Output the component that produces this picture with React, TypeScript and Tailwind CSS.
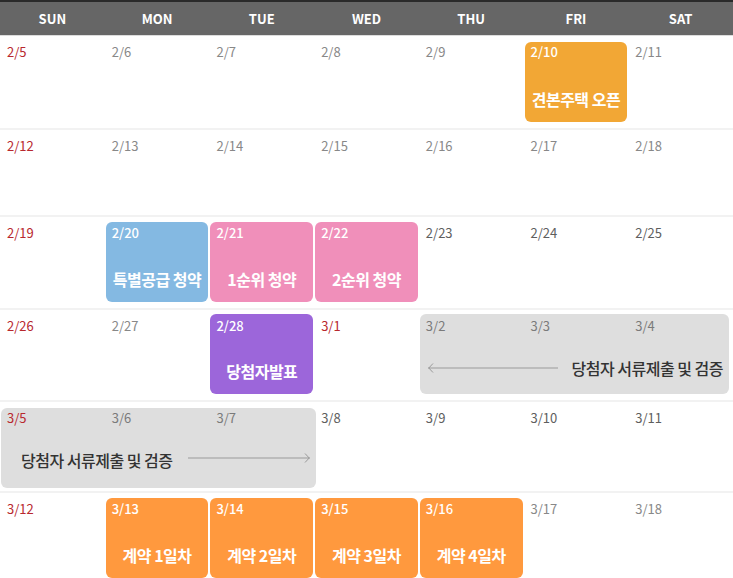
import React from "react";

type Tone = "red" | "light" | "dark" | "white" | "grayIn" | "redIn";

type Day = { d: string; tone: Tone };

type Ev = {
  cls: string;
  label: string;
  kind: "solid" | "gray-left" | "gray-right";
};

type Week = { h: string; days: Day[]; events: Ev[] };

const heads = ["SUN", "MON", "TUE", "WED", "THU", "FRI", "SAT"];

const colStart = [
  "col-start-1",
  "col-start-2",
  "col-start-3",
  "col-start-4",
  "col-start-5",
  "col-start-6",
  "col-start-7",
];

const toneCls: Record<Tone, string> = {
  red: "text-[#b8282e]",
  redIn: "text-[#b8282e]",
  light: "text-[#888]",
  dark: "text-[#5e5e5e]",
  white: "text-white",
  grayIn: "text-[#7a7a7a]",
};

const weeks: Week[] = [
  {
    h: "h-[92px]",
    days: [
      { d: "2/5", tone: "red" },
      { d: "2/6", tone: "light" },
      { d: "2/7", tone: "light" },
      { d: "2/8", tone: "light" },
      { d: "2/9", tone: "light" },
      { d: "2/10", tone: "white" },
      { d: "2/11", tone: "light" },
    ],
    events: [
      {
        cls: "col-start-6 col-span-1 mt-[6px] mx-[1px] bg-[#f2a735]",
        label: "견본주택 오픈",
        kind: "solid",
      },
    ],
  },
  {
    h: "h-[85px]",
    days: [
      { d: "2/12", tone: "red" },
      { d: "2/13", tone: "light" },
      { d: "2/14", tone: "light" },
      { d: "2/15", tone: "light" },
      { d: "2/16", tone: "light" },
      { d: "2/17", tone: "light" },
      { d: "2/18", tone: "light" },
    ],
    events: [],
  },
  {
    h: "h-[91px]",
    days: [
      { d: "2/19", tone: "red" },
      { d: "2/20", tone: "white" },
      { d: "2/21", tone: "white" },
      { d: "2/22", tone: "white" },
      { d: "2/23", tone: "dark" },
      { d: "2/24", tone: "dark" },
      { d: "2/25", tone: "dark" },
    ],
    events: [
      {
        cls: "col-start-2 col-span-1 mt-[5px] mx-[1px] bg-[#84b9e2]",
        label: "특별공급 청약",
        kind: "solid",
      },
      {
        cls: "col-start-3 col-span-1 mt-[5px] mx-[1px] bg-[#f08fba]",
        label: "1순위 청약",
        kind: "solid",
      },
      {
        cls: "col-start-4 col-span-1 mt-[5px] mx-[1px] bg-[#f08fba]",
        label: "2순위 청약",
        kind: "solid",
      },
    ],
  },
  {
    h: "h-[90px]",
    days: [
      { d: "2/26", tone: "red" },
      { d: "2/27", tone: "light" },
      { d: "2/28", tone: "white" },
      { d: "3/1", tone: "red" },
      { d: "3/2", tone: "grayIn" },
      { d: "3/3", tone: "grayIn" },
      { d: "3/4", tone: "grayIn" },
    ],
    events: [
      {
        cls: "col-start-3 col-span-1 mt-[4px] mx-[1px] bg-[#9c66da]",
        label: "당첨자발표",
        kind: "solid",
      },
      {
        cls: "col-start-5 col-span-3 mt-[4px] ml-[1px] mr-[4px] bg-[#dedede]",
        label: "당첨자 서류제출 및 검증",
        kind: "gray-left",
      },
    ],
  },
  {
    h: "h-[89px]",
    days: [
      { d: "3/5", tone: "redIn" },
      { d: "3/6", tone: "grayIn" },
      { d: "3/7", tone: "grayIn" },
      { d: "3/8", tone: "dark" },
      { d: "3/9", tone: "dark" },
      { d: "3/10", tone: "dark" },
      { d: "3/11", tone: "dark" },
    ],
    events: [
      {
        cls: "col-start-1 col-span-3 mt-[6px] ml-[1px] mr-[-1.5px] bg-[#dedede]",
        label: "당첨자 서류제출 및 검증",
        kind: "gray-right",
      },
    ],
  },
  {
    h: "h-[85px]",
    days: [
      { d: "3/12", tone: "red" },
      { d: "3/13", tone: "white" },
      { d: "3/14", tone: "white" },
      { d: "3/15", tone: "white" },
      { d: "3/16", tone: "white" },
      { d: "3/17", tone: "light" },
      { d: "3/18", tone: "light" },
    ],
    events: [
      {
        cls: "col-start-2 col-span-1 mt-[5px] mx-[1px] bg-[#ff993e]",
        label: "계약 1일차",
        kind: "solid",
      },
      {
        cls: "col-start-3 col-span-1 mt-[5px] mx-[1px] bg-[#ff993e]",
        label: "계약 2일차",
        kind: "solid",
      },
      {
        cls: "col-start-4 col-span-1 mt-[5px] mx-[1px] bg-[#ff993e]",
        label: "계약 3일차",
        kind: "solid",
      },
      {
        cls: "col-start-5 col-span-1 mt-[5px] mx-[1px] bg-[#ff993e]",
        label: "계약 4일차",
        kind: "solid",
      },
    ],
  },
];

function Arrow({ dir, width }: { dir: "left" | "right"; width: number }) {
  const y = 5;
  return (
    <svg width={width} height={10} viewBox={`0 0 ${width} 10`} className="shrink-0">
      <line x1={0} y1={y} x2={width} y2={y} stroke="#9a9a9a" strokeWidth={1} />
      {dir === "left" ? (
        <polyline points={`5,0.5 0.8,${y} 5,9.5`} fill="none" stroke="#9a9a9a" strokeWidth={1} />
      ) : (
        <polyline
          points={`${width - 5},0.5 ${width - 0.8},${y} ${width - 5},9.5`}
          fill="none"
          stroke="#9a9a9a"
          strokeWidth={1}
        />
      )}
    </svg>
  );
}

function EventBlock({ ev }: { ev: Ev }) {
  if (ev.kind === "solid") {
    return (
      <div className={`row-start-1 h-[80px] rounded-[6px] ${ev.cls} flex flex-col items-center pt-[46px]`}>
        <span className="text-[16px] leading-[22px] font-bold tracking-[-0.5px] text-white whitespace-nowrap">
          {ev.label}
        </span>
      </div>
    );
  }
  if (ev.kind === "gray-left") {
    return (
      <div className={`row-start-1 h-[80px] rounded-[6px] ${ev.cls} flex items-center pl-[8px] pr-[6px] pt-[28px]`}>
        <Arrow dir="left" width={130} />
        <span className="ml-auto text-[16px] leading-[22px] font-medium tracking-[-0.5px] text-[#333] whitespace-nowrap">
          {ev.label}
        </span>
      </div>
    );
  }
  return (
    <div
      className={`row-start-1 h-[80px] rounded-[6px] ${ev.cls} flex items-center justify-between pl-[20px] pr-[6px] pt-[24px]`}
    >
      <span className="text-[16px] leading-[22px] font-medium tracking-[-0.5px] text-[#333] whitespace-nowrap">
        {ev.label}
      </span>
      <div className="mb-[5px]">
        <Arrow dir="right" width={122} />
      </div>
    </div>
  );
}

export default function App() {
  return (
    <div className="w-[733px] h-[578px] overflow-hidden bg-white font-['Noto_Sans_CJK_KR','Noto_Sans',sans-serif]">
      <div className="grid grid-cols-7 h-[36px] bg-[#666] border-t-[2px] border-t-[#2a2a2a] border-b border-b-[#dcdcdc]">
        {heads.map((h) => (
          <div key={h} className="flex items-center justify-center text-[13px] font-bold text-white">
            {h}
          </div>
        ))}
      </div>

      <div className="flex flex-col gap-[2px] bg-[#f2f2f2]">
        {weeks.map((w, wi) => (
          <div key={wi} className={`grid grid-cols-7 bg-white ${w.h}`}>
            {w.events.map((ev, ei) => (
              <EventBlock key={ei} ev={ev} />
            ))}
            {w.days.map((day, di) => (
              <div
                key={day.d}
                className={`row-start-1 ${colStart[di]} z-10 self-start pl-[7px] pt-[8px] text-[13px] leading-4 ${
                  toneCls[day.tone]
                } ${day.tone === "white" ? "font-medium" : ""}`}
              >
                {day.d}
              </div>
            ))}
          </div>
        ))}
      </div>
    </div>
  );
}
